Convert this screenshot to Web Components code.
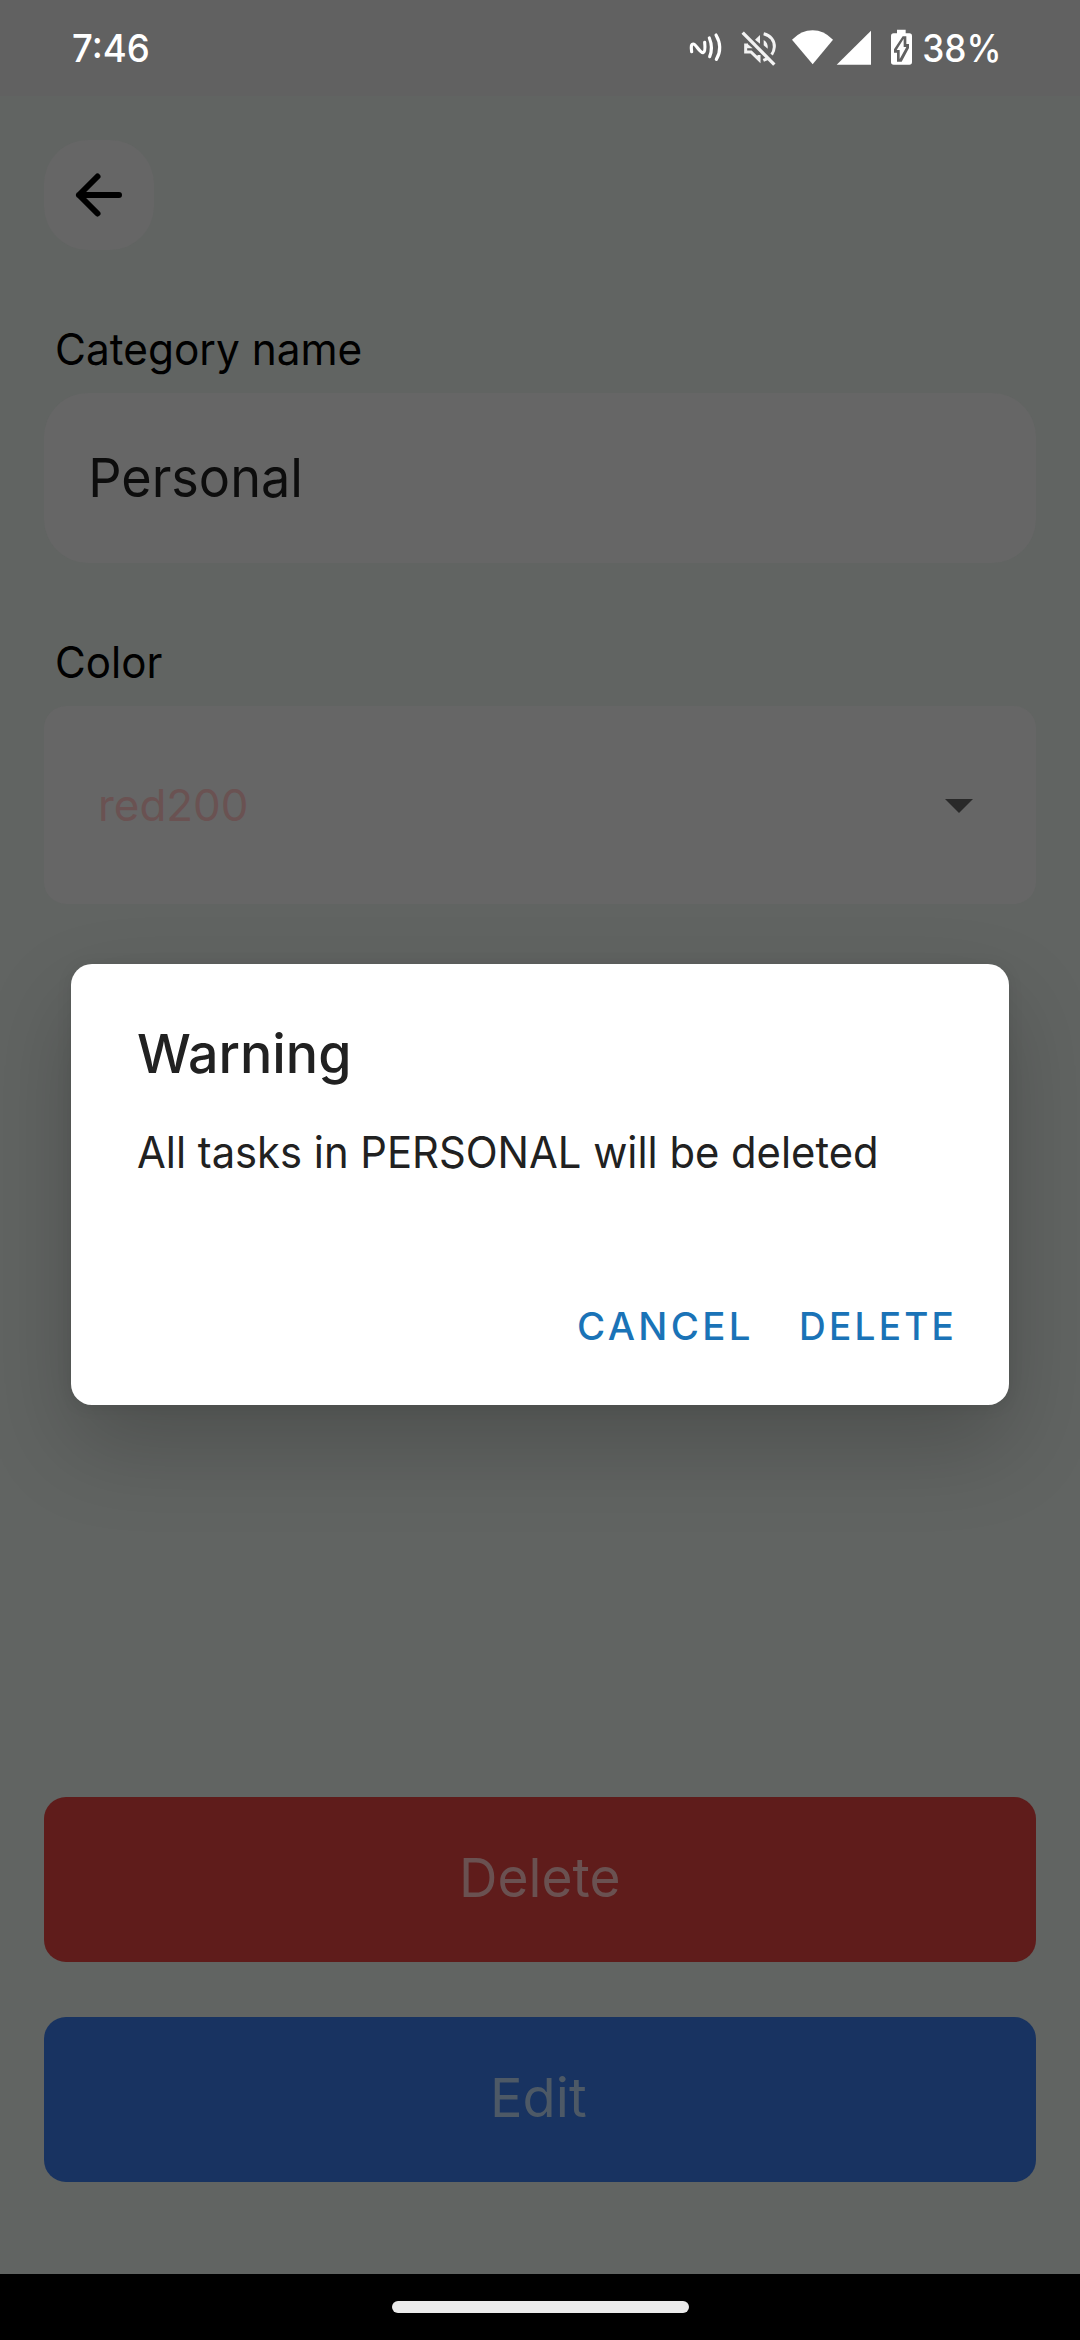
<!DOCTYPE html>
<html lang="en">
<head>
<meta charset="utf-8">
<title>Edit category</title>
<style>
html, body { margin: 0; height: 100%; }
body { font-family: Inter, Roboto, "Noto Sans", sans-serif; background: #616462; overflow: hidden; }
</style>
</head>
<body>
<app-screen>
  <status-bar slot="top" time="7:46" battery="38%"></status-bar>
  <back-button></back-button>
  <form-field label="Category name" label-width="304" style="margin-top:71px">
    <text-box>Personal</text-box>
  </form-field>
  <form-field label="Color" label-width="105" style="margin-top:71px">
    <color-select>red200</color-select>
  </form-field>
  <action-button slot="actions" ink="155" style="--fill:#5f1c1b;--ink:#6a5151">Delete</action-button>
  <action-button slot="actions" ink="92" style="--fill:#183361;--ink:#4d5966">Edit</action-button>
  <nav-bar slot="bottom"></nav-bar>
</app-screen>
<alert-dialog heading="Warning" message="All tasks in PERSONAL will be deleted">
  <dialog-button ink="170">CANCEL</dialog-button>
  <dialog-button ink="150">DELETE</dialog-button>
</alert-dialog>

<script>
const define = (name, html, setup) => customElements.define(name, class extends HTMLElement {
  connectedCallback() {
    if (this.shadowRoot) return;
    const root = this.attachShadow({ mode: "open" });
    root.innerHTML = html;
    if (setup) setup(this, root);
  }
});

const fitText = (text, ink) => {
  const t = document.createElement("fit-text");
  t.setAttribute("ink", ink);
  t.textContent = text;
  return t;
};

// One line of text whose drawn glyphs span exactly the given width.
define("fit-text", `
  <style>
    :host { display: block; flex: none; white-space: nowrap; line-height: 60px; height: 60px; }
    span { display: inline-block; transform-origin: 0 50%; }
  </style><span><slot></slot></span>`, (el, root) => {
  const ink = +el.getAttribute("ink");
  const cs = getComputedStyle(el);
  const ctx = document.createElement("canvas").getContext("2d");
  ctx.font = `${cs.fontWeight} ${cs.fontSize} Inter, Roboto, sans-serif`;
  if (cs.letterSpacing !== "normal") ctx.letterSpacing = cs.letterSpacing;
  const m = ctx.measureText(el.textContent);
  const s = ink / (m.actualBoundingBoxRight + m.actualBoundingBoxLeft);
  el.style.width = ink + "px";
  root.querySelector("span").style.transform = `translateX(${m.actualBoundingBoxLeft * s}px) scaleX(${s})`;
});

define("app-screen", `
  <style>
    :host { display: flex; flex-direction: column; height: 2340px; width: 1080px; }
    main { flex: 1; display: flex; flex-direction: column; padding: 44px 44px 92px; background: #616462; }
    .actions { margin-top: auto; display: flex; flex-direction: column; gap: 55px; }
  </style>
  <slot name="top"></slot>
  <main><slot></slot><div class="actions"><slot name="actions"></slot></div></main>
  <slot name="bottom"></slot>`);

define("status-bar", `
  <style>
    :host { display: flex; align-items: center; justify-content: space-between; height: 96px; box-sizing: border-box;
      padding: 0 82px 1px 73px; background: #616161; color: #fff; font-size: 38px; font-weight: 550; }
    .right { display: flex; align-items: center; gap: 3px; }
    svg { display: block; height: 40px; margin-top: 1px; }
  </style>
  <div class="left"></div>
  <div class="right">
    <svg width="232" viewBox="87 84 696 120" fill="none">
      <g stroke="#fff" stroke-width="9.5" stroke-linecap="round" stroke-linejoin="round">
        <path d="M95 155 Q91 132 100 132 C108 132 118 158 129 158 Q137 156 134 127"/>
        <path d="M148 114 Q160 143 149 170"/>
        <path d="M168 105 Q190 143 169 178"/>
      </g>
      <g stroke="#f3f3f3" stroke-width="9" stroke-linejoin="miter">
        <path d="M264 135 H257 V156 H273 L297 179 V165"/>
        <path d="M262 131 L278 145 H258Z" fill="#f3f3f3" stroke="none"/>
        <path d="M285 119 L300 105 V131Z" fill="#f3f3f3" stroke="none"/>
        <path d="M311 101 C332 106 344 122 343 141 Q342 154 335 164"/>
        <path d="M311 120 Q325 128 323 146 L311 136Z" fill="#f3f3f3" stroke="none"/>
        <path d="M310 181 L324 175" />
        <path d="M248 98 L343 194" stroke-width="10"/>
      </g>
      <g fill="#fff">
        <path d="M396 119 Q424 91 458 91 Q491 91 519 119 L458 193Z"/>
        <path d="M530 194 L633 92 V194Z"/>
        <path d="M711 100 V89 H737 V100 H748 Q756 100 756 108 V186 Q756 194 748 194 H701 Q693 194 693 186 V108 Q693 100 701 100Z"/>
      </g>
      <path d="M728 109 H739 V132 H747 V144 L725 185 H711 V158 H702 V148Z" fill="#616161"/>
      <path d="M731 116 V141 H739 L719 177 V150 H710Z" fill="#fff"/>
    </svg>
  </div>`, (el, root) => {
  root.querySelector(".left").append(fitText(el.getAttribute("time"), 75));
  root.querySelector(".right").append(fitText(el.getAttribute("battery"), 74));
});

define("back-button", `
  <style>
    :host { display: grid; place-items: center; width: 110px; height: 110px; border-radius: 44px; background: #666; }
    svg { display: block; }
  </style>
  <svg width="110" height="110" viewBox="0 0 110 110" fill="none" stroke="#000" stroke-width="6" stroke-linecap="round" stroke-linejoin="round">
    <path d="M75 55 H35 M53.5 36.5 L35 55 L53.5 73.5"/>
  </svg>`);

define("form-field", `
  <style>
    :host { display: block; }
    header { padding-left: 13px; height: 72px; display: flex; align-items: flex-start; color: #000; font-size: 43.5px; }
    fit-text { margin-top: -2px; }
  </style>
  <header></header><slot></slot>`, (el, root) => {
  root.querySelector("header").append(fitText(el.getAttribute("label"), el.getAttribute("label-width")));
});

define("text-box", `
  <style>
    :host { display: flex; align-items: center; height: 170px; padding-left: 48px; border-radius: 44px;
      background: #666; color: #0d0d0d; font-size: 54px; }
  </style>`, (el, root) => root.append(fitText(el.textContent, 207)));

define("color-select", `
  <style>
    :host { display: flex; align-items: center; justify-content: space-between; height: 198px; box-sizing: border-box;
      padding: 0 63px 0 57px; border-radius: 22px; background: #666; color: #6a5252; font-size: 43.5px; }
    svg { display: block; margin-top: 2px; }
  </style>
  <svg width="28" height="14" viewBox="0 0 28 14"><path d="M0 0 H28 L14 14Z" fill="#292929"/></svg>`, (el, root) => {
  root.querySelector("svg").before(fitText(el.textContent, 145));
});

define("action-button", `
  <style>
    :host { display: flex; align-items: center; justify-content: center; height: 165px; box-sizing: border-box; padding-bottom: 3px;
      border-radius: 22px; background: var(--fill); color: var(--ink); font-size: 54px; }
  </style>`, (el, root) => root.append(fitText(el.textContent, el.getAttribute("ink"))));

define("nav-bar", `
  <style>
    :host { display: flex; justify-content: center; height: 66px; background: #000; }
    i { width: 297px; height: 12px; margin-top: 26.5px; border-radius: 6px; background: #ebebeb; }
  </style><i></i>`);

define("dialog-button", `
  <style>
    :host { display: block; color: #1a73b7; font-size: 38px; font-weight: 500; letter-spacing: 3.3px; }
  </style>`, (el, root) => root.append(fitText(el.textContent, el.getAttribute("ink"))));

define("alert-dialog", `
  <style>
    :host { position: absolute; inset: 0; display: flex; justify-content: center; align-items: flex-start; padding-top: 964px; }
    section { width: 938px; height: 441px; box-sizing: border-box; border-radius: 21px; background: #fff; color: #212121;
      padding: 60px 57px 49px 67px; display: flex; flex-direction: column;
      box-shadow: 0 40px 90px rgba(0,0,0,.2), 0 2px 16px rgba(0,0,0,.08); }
    .title { font-size: 54px; font-weight: 550; }
    .message { font-size: 43.5px; margin-top: 38px; }
    footer { margin-top: auto; display: flex; justify-content: flex-end; gap: 53px; }
  </style>
  <section><div class="title"></div><div class="message"></div><footer><slot></slot></footer></section>`, (el, root) => {
  root.querySelector(".title").append(fitText(el.getAttribute("heading"), 210));
  root.querySelector(".message").append(fitText(el.getAttribute("message"), 738));
});
</script>
</body>
</html>
